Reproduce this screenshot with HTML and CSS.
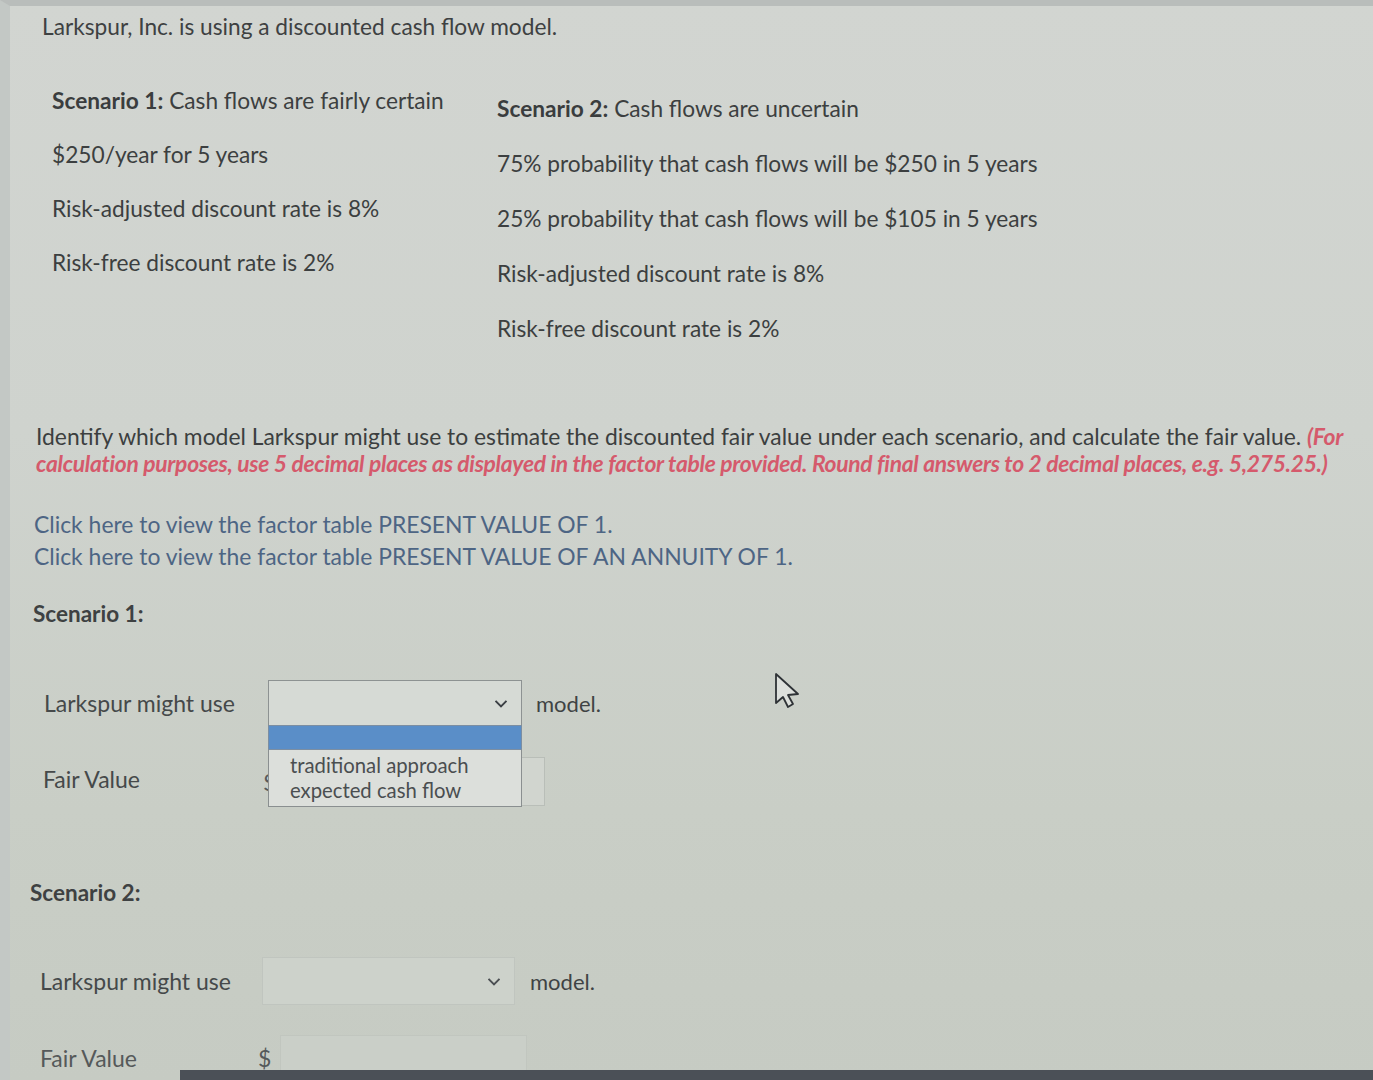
FILE: index.html
```html
<!DOCTYPE html>
<html lang="en">
<head>
<meta charset="utf-8">
<title>Larkspur discounted cash flow</title>
<link rel="stylesheet" href="styles.css">
</head>
<body>
<div class="page">
  <p class="title">Larkspur, Inc. is using a discounted cash flow model.</p>

  <div class="scen">
    <div class="col c1">
      <p><b>Scenario 1:</b> Cash flows are fairly certain</p>
      <p>$250/year for 5 years</p>
      <p>Risk-adjusted discount rate is 8%</p>
      <p>Risk-free discount rate is 2%</p>
    </div>
    <div class="col c2">
      <p><b>Scenario 2:</b> Cash flows are uncertain</p>
      <p>75% probability that cash flows will be $250 in 5 years</p>
      <p>25% probability that cash flows will be $105 in 5 years</p>
      <p>Risk-adjusted discount rate is 8%</p>
      <p>Risk-free discount rate is 2%</p>
    </div>
  </div>

  <p class="instr"><span class="plain">Identify which model Larkspur might use to estimate the discounted fair value under each scenario, and calculate the fair value.</span> <span class="red">(For</span> <span class="red">calculation purposes, use 5 decimal places as displayed in the factor table provided. Round final answers to 2 decimal places, e.g. 5,275.25.)</span></p>

  <div class="links">
    <a href="#">Click here to view the factor table PRESENT VALUE OF 1.</a>
    <a href="#">Click here to view the factor table PRESENT VALUE OF AN ANNUITY OF 1.</a>
  </div>

  <h3 class="sh sh1">Scenario 1:</h3>

  <div class="row row-sel s1">
    <span class="lbl">Larkspur might use</span>
    <div class="select open">
      <span class="chev"><svg width="14" height="9" viewBox="0 0 14 9"><path d="M1.5 1.5 L7 7 L12.5 1.5" fill="none" stroke="#3b3f44" stroke-width="2"/></svg></span>
      <div class="menu">
        <div class="opt hl"></div>
        <div class="opts">
          <div class="opt">traditional approach</div>
          <div class="opt">expected cash flow</div>
        </div>
      </div>
    </div>
    <span class="after">model.</span>
    <span class="cursor"><svg width="32" height="38" viewBox="0 0 32 38"><path d="M3 2 L3 31 L10 25 L15 35 L20 32 L15 23 L25 22 Z" fill="#dde0dc" stroke="#2e3236" stroke-width="1.8" stroke-linejoin="round"/></svg></span>
  </div>

  <div class="row row-fv s1">
    <span class="lbl">Fair Value</span>
    <span class="dollar">$</span>
    <div class="input"></div>
  </div>

  <h3 class="sh sh2">Scenario 2:</h3>

  <div class="row row-sel s2">
    <span class="lbl">Larkspur might use</span>
    <div class="select faint">
      <span class="chev"><svg width="14" height="9" viewBox="0 0 14 9"><path d="M1.5 1.5 L7 7 L12.5 1.5" fill="none" stroke="#4a4e52" stroke-width="2"/></svg></span>
    </div>
    <span class="after">model.</span>
  </div>

  <div class="row row-fv s2">
    <span class="lbl">Fair Value</span>
    <span class="dollar">$</span>
    <div class="input faint"></div>
  </div>

  <div class="bezel"></div>
</div>
</body>
</html>
```

FILE: styles.css
```css
html, body {
  margin: 0;
  padding: 0;
}
body {
  width: 1373px;
  height: 1080px;
  overflow: hidden;
  background: linear-gradient(180deg, #d2d5d1 0%, #cfd3ce 40%, #c9cec6 75%, #c6cbc3 100%);
  font-family: Lato, "Open Sans", sans-serif;
  color: #3c3f40;
}
.page {
  position: relative;
  height: 1080px;
  border-top: 6px solid #b9bdbb;
  box-sizing: border-box;
  border-left: 10px solid #c3c8c5;
}
p { margin: 0; }

.title {
  margin: 8px 0 0 32px;
  font-size: 22.7px;
  line-height: 26px;
  color: #3e4142;
}

.scen {
  display: flex;
  margin-top: 46px;
}
.col {
  display: flex;
  flex-direction: column;
  font-size: 22.7px;
  line-height: 30px;
}
.col b { font-weight: 700; color: #3a3d3e; }
.c1 {
  margin-left: 42px;
  width: 445px;
  gap: 24px;
}
.c2 {
  padding-top: 8px;
  gap: 25px;
}

.instr {
  margin: 79px 16px 0 26px;
  font-size: 22.85px;
  line-height: 27px;
  color: #3c3f40;
}
.red {
  color: #d55a6c;
  font-style: italic;
  font-weight: 700;
  letter-spacing: -0.3px;
}

.links {
  margin: 31px 0 0 24px;
  display: flex;
  flex-direction: column;
  font-size: 22.9px;
  line-height: 32px;
}
.links a {
  color: #4d6584;
  text-decoration: none;
}

.sh {
  margin: 27px 0 0 23px;
  font-size: 22.5px;
  line-height: 30px;
  font-weight: 700;
  color: #3e4142;
}
.sh2 {
  margin-top: 72px;
  margin-left: 20px;
}

.row {
  display: flex;
  align-items: center;
  font-size: 23px;
  position: relative;
}
.row .lbl {
  color: #45494a;
}
.row-sel.s1 {
  margin: 51px 0 0 34px;
  height: 46px;
}
.row-sel.s1 .lbl { width: 224px; }
.row-fv.s1 {
  margin: 31px 0 0 33px;
  height: 49px;
}
.row-fv.s1 .lbl { width: 220px; margin-top: -6px; }
.row-sel.s2 {
  margin: 49px 0 0 30px;
  height: 48px;
}
.row-sel.s2 .lbl { width: 222px; }
.row-fv.s2 {
  margin: 30px 0 0 30px;
  height: 46px;
}
.row-fv.s2 .lbl { width: 218px; color: #55595a; }

.select {
  position: relative;
  width: 254px;
  height: 100%;
  box-sizing: border-box;
  border: 1.5px solid #8d9292;
  background: #d6dad5;
}
.select.faint {
  width: 253px;
  border: 1px solid #c0c5bf;
  background: #cdd2cb;
}
.chev {
  position: absolute;
  right: 13px;
  top: 50%;
  transform: translateY(-40%);
  display: flex;
}
.after {
  margin-left: 14px;
  font-size: 22px;
  color: #3f4344;
}
.s2 .after { margin-left: 15px; }

.menu {
  position: absolute;
  left: -1px;
  top: 44px;
  width: 254px;
  z-index: 5;
}
.opt.hl {
  height: 25px;
  background: #5a8ec8;
  border: 1px solid #7c8ea2;
  box-sizing: border-box;
}
.opts {
  background: #dcdfdb;
  border: 1px solid #8a8f90;
  border-top: none;
  padding: 3px 0 3px;
}
.opts .opt {
  font-size: 20.3px;
  line-height: 25px;
  padding-left: 21px;
  color: #4a4e50;
}

.cursor {
  position: absolute;
  left: 729px;
  top: -8px;
  display: flex;
}

.dollar {
  color: #55595a;
  width: 16px;
}
.input {
  width: 266px;
  height: 100%;
  box-sizing: border-box;
  border: 1px solid #b9beb8;
  background: #d1d5cf;
}
.input.faint {
  margin-left: 6px;
  width: 247px;
  border: 1px solid #c1c6bf;
  background: #cacfc8;
}

.bezel {
  position: absolute;
  left: 170px;
  right: 0;
  bottom: 0;
  height: 10px;
  background: #4b5057;
}
```
